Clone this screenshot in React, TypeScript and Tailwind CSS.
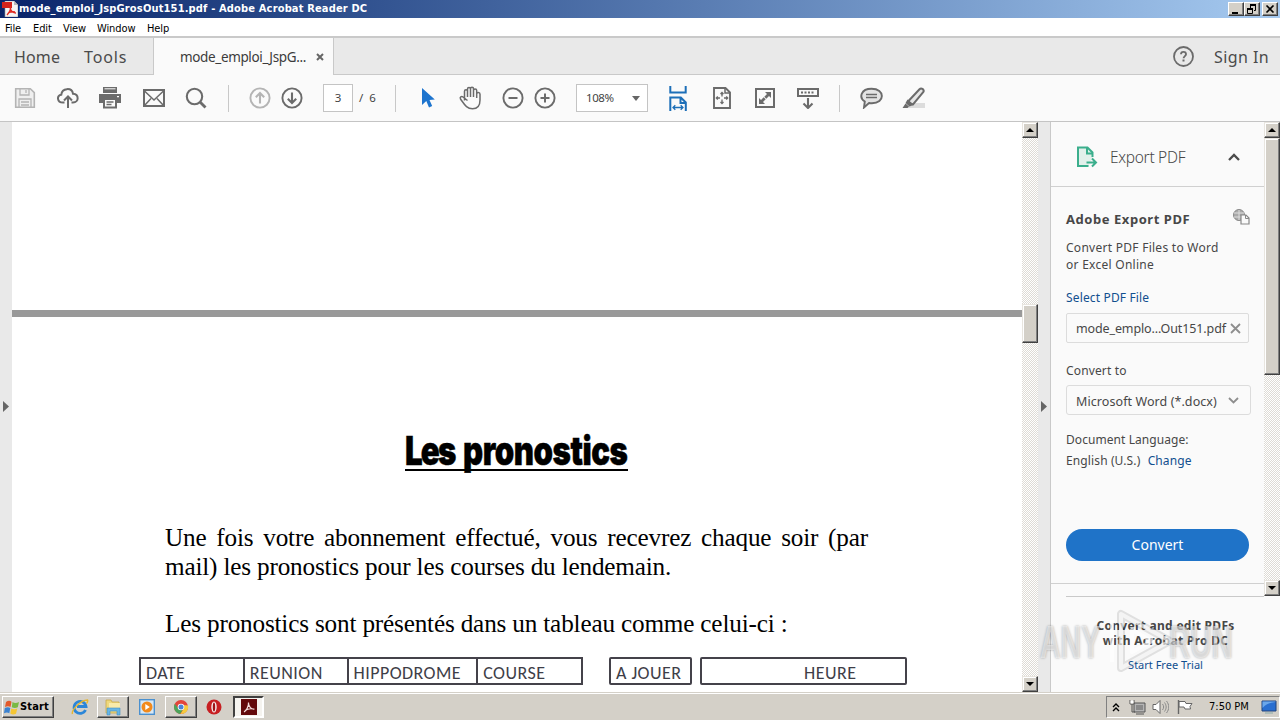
import type { ReactNode } from "react";

const G = "#6b6b6b";

function Svg({ w, h, vb, className = "", children }: { w: number; h: number; vb?: string; className?: string; children: ReactNode }) {
  return (
    <svg width={w} height={h} viewBox={vb ?? `0 0 ${w} ${h}`} fill="none" className={`block shrink-0 ${className}`}>
      {children}
    </svg>
  );
}

function WinButton({ children, className = "" }: { children: ReactNode; className?: string }) {
  return (
    <div className={`flex h-[14px] w-4 items-center justify-center border border-t-white border-r-[#404040] border-b-[#404040] border-l-white bg-[#d4d0c8] shadow-[inset_-1px_-1px_0_#808080] ${className}`}>
      {children}
    </div>
  );
}

function TitleBar() {
  return (
    <div className="flex h-[18px] shrink-0 items-center bg-linear-to-r from-[#0a246a] to-[#a6caf0] pr-[2px] pl-[2px]">
      <Svg w={16} h={16}>
        <path d="M3 0h9l4 4v12H3z" fill="#f4f4f4" stroke="#9a9a9a" strokeWidth=".6" />
        <path d="M12 0v4h4z" fill="#b9b9b9" />
        <rect y="1" width="10" height="6" fill="#d3231c" />
        <path d="M5 14c2-2 4-6 3.600-9M8 7c1 3 3 5 6 5M6 12c2-1 5-1.500 7-1" stroke="#e02a20" strokeWidth="1.300" />
      </Svg>
      <div className="ml-px flex-1 font-['DejaVu_Sans_Condensed','DejaVu_Sans',sans-serif] text-[11px] leading-[18px] font-bold tracking-[0.16px] whitespace-pre text-white">
        mode_emploi_JspGrosOut151.pdf - Adobe Acrobat Reader DC
      </div>
      <WinButton><Svg w={12} h={10}><path d="M2 8h6v2H2z" fill="#000" /></Svg></WinButton>
      <WinButton>
        <Svg w={12} h={11}>
          <path d="M4 1h6M1 5h6" stroke="#000" strokeWidth="2" />
          <path d="M4.500 1v3M9.500 1v5.500H8M1.500 5v4.500h5V5" stroke="#000" />
        </Svg>
      </WinButton>
      <WinButton className="ml-[2px]"><Svg w={10} h={8}><path d="M1.500 .5l7 7M8.500 .5l-7 7" stroke="#000" strokeWidth="1.600" /></Svg></WinButton>
    </div>
  );
}

function MenuBar() {
  return (
    <div className="flex h-[20px] shrink-0 border-b-2 border-[#c9c9c9] bg-white pl-[5px] font-['DejaVu_Sans_Condensed','DejaVu_Sans',sans-serif] text-[11px] leading-[21px] tracking-[-0.1px] text-black">
      <span className="w-[28px]">File</span>
      <span className="w-[30px]">Edit</span>
      <span className="w-[34px]">View</span>
      <span className="w-[50px]">Window</span>
      <span>Help</span>
    </div>
  );
}

function Tabs() {
  return (
    <div className="flex h-[37px] shrink-0 bg-[#e9e9e9] text-[#4b4b4b]">
      <div className="flex w-[154px] border-r border-b border-[#c9c9c9] pl-[14px] text-base leading-[38px] tracking-[0.15px]">
        <span className="w-[70px]">Home</span>
        <span className="tracking-[0.9px]">Tools</span>
      </div>
      <div className="flex w-[179px] items-center bg-[#fafafa] pl-[26px] text-[13.500px] text-[#3c3c3c]">
        <span className="w-[136px] pt-px tracking-[-0.36px]">mode_emploi_JspG...</span>
        <Svg w={8} h={8}><path d="M1 1l6 6M7 1L1 7" stroke="#666" strokeWidth="2" /></Svg>
      </div>
      <div className="flex flex-1 items-center justify-end border-b border-l border-[#c9c9c9] pt-px pr-[11px]">
        <Svg w={22} h={22} className="mr-[19px]">
          <circle cx="10.500" cy="10.500" r="9.500" stroke={G} strokeWidth="1.800" />
          <path d="M8 8.300c0-3.200 5-3.200 5 0 0 1.800-2.400 1.900-2.400 4" stroke={G} strokeWidth="1.900" />
          <path d="M9.500 13.500h2v2h-2z" fill={G} />
        </Svg>
        <span className="text-base tracking-[0.4px]">Sign In</span>
      </div>
    </div>
  );
}

function Sep({ className = "" }: { className?: string }) {
  return <div className={`h-[27px] w-px shrink-0 bg-[#c8c8c8] ${className}`} />;
}

function Toolbar() {
  return (
    <div className="flex h-[47px] shrink-0 items-center border-b border-[#c4c4c4] bg-[#fafafa] pl-[14px] text-[12px] text-[#444]">
      <Svg w={22} h={22}>
        <path d="M1.700 1.700h14.600l4 4v14.600H1.700z" fill="#efefef" stroke="#b4b4b4" strokeWidth="1.600" />
        <path d="M6 2v6h9V2M5 20v-8h12v8M7 15h8M7 18h8M12 3v3" stroke="#b4b4b4" strokeWidth="1.300" />
      </Svg>
      <Svg w={22} h={22} className="ml-[21px]">
        <path d="M7.500 15.500H6C-.2 15.500-.5 8.200 4.300 7.700 5 .7 14.800.2 16 6.700c6.200.3 6.200 8.800 0 8.800h-1.500" stroke={G} strokeWidth="2" />
        <path d="M11 21V10M7 13.500l4-4 4 4" stroke={G} strokeWidth="2" />
      </Svg>
      <Svg w={22} h={22} className="ml-[20px]">
        <path d="M4 0h14v6H4z" fill={G} />
        <path d="M5.500 1.800h11" stroke="#fafafa" />
        <path d="M0 7h22v9h-4v-4H4v4H0z" fill={G} />
        <path d="M5 12h12v8.500H5z" fill="#fafafa" stroke={G} strokeWidth="2" />
        <path d="M7.500 15h7M7.500 17.500h5" stroke={G} strokeWidth="1.300" />
        <path d="M18 9h2v1.300h-2z" fill="#fff" />
      </Svg>
      <Svg w={22} h={18} className="ml-[22px]">
        <rect x="1" y="1" width="20" height="16" stroke={G} strokeWidth="2" />
        <path d="M1.500 2l9.500 9 9.500-9M1.500 16.500l6.500-7M20.500 16.500l-6.500-7" stroke={G} strokeWidth="1.500" />
      </Svg>
      <Svg w={22} h={22} className="ml-[20px]">
        <circle cx="9.500" cy="9.500" r="7.700" stroke={G} strokeWidth="2.100" />
        <path d="M15 15l5.500 5.500" stroke={G} strokeWidth="2.800" />
      </Svg>
      <Sep className="ml-[21px]" />
      <Svg w={22} h={22} className="ml-[20px]">
        <circle cx="11" cy="11" r="9.600" stroke="#b4b4b4" strokeWidth="1.900" />
        <path d="M11 16.500V6M6.800 10.200L11 6l4.200 4.200" stroke="#b4b4b4" strokeWidth="2.100" />
      </Svg>
      <Svg w={22} h={22} className="ml-[10px]">
        <circle cx="11" cy="11" r="9.600" stroke={G} strokeWidth="1.900" />
        <path d="M11 5.500V16M6.800 11.800L11 16l4.200-4.200" stroke={G} strokeWidth="2.100" />
      </Svg>
      <div className="ml-[20px] h-[28px] w-[30px] border border-[#c4c4c4] bg-white text-center text-[11.500px] leading-[26px]">3</div>
      <span className="ml-[6px] w-[17px] text-[11.500px] whitespace-pre">/  6</span>
      <Sep className="ml-[19px]" />
      <Svg w={16} h={22} className="ml-[24px]">
        <path d="M2 1v17l4.300-4 2.700 6.500 3.200-1.400-2.700-6.200 5.300-.4z" fill="#1d74ce" />
      </Svg>
      <Svg w={24} h={24} className="ml-[22px]">
        <path d="M6.500 14.500V5.200c0-2 3-2 3 0V3c0-2 3-2 3 0v-.3c0-2 3-2 3 0V4.500c0-2 3.200-2 3.200 0V8c0-2 3.300-2 3.300.2V14c0 5.500-2.500 8.800-7.500 8.800-6 0-8-4.300-12-9.800-1-2 1-3.200 2.500-2l4.500 3.500M9.500 5v6M12.500 3v8M15.500 4v7M18.700 7v5" stroke={G} strokeWidth="1.500" strokeLinejoin="round" />
      </Svg>
      <Svg w={22} h={22} className="ml-[20px]">
        <circle cx="11" cy="11" r="9.600" stroke={G} strokeWidth="1.900" />
        <path d="M6.500 11h9" stroke={G} strokeWidth="2" />
      </Svg>
      <Svg w={22} h={22} className="ml-[10px]">
        <circle cx="11" cy="11" r="9.600" stroke={G} strokeWidth="1.900" />
        <path d="M6.500 11h9M11 6.500v9" stroke={G} strokeWidth="2" />
      </Svg>
      <div className="ml-[20px] flex h-[28px] w-[72px] shrink-0 items-center justify-between border border-[#c4c4c4] bg-white pr-[7px] pl-[9px]">
        <span className="text-[11.500px] tracking-[-0.4px]">108%</span>
        <Svg w={8} h={5}><path d="M0 0h8L4 5z" fill="#666" /></Svg>
      </div>
      <Svg w={18} h={25} className="ml-[21px]">
        <path d="M1.300 0v6.500h15.400V0M1.300 25V11.500h10.500l5 5V25M11.500 12v5h5" stroke="#1d6fb8" strokeWidth="2" />
        <path d="M4 21.500h10M6.300 19.200L4 21.500l2.300 2.300M11.700 19.200l2.300 2.300-2.300 2.300" stroke="#1d6fb8" strokeWidth="1.300" />
      </Svg>
      <Svg w={18} h={22} className="ml-[26px]">
        <path d="M1 1h11.500l4.500 4.500V21H1z" stroke={G} strokeWidth="1.900" />
        <path d="M12 1v5h5" stroke={G} strokeWidth="1.500" />
        <path d="M9 5.500v4M9 12.500v4M3.300 11h3.700M11 11h3.700M7.500 7L9 5.500 10.500 7M7.500 15L9 16.500 10.500 15M4.800 9.500L3.300 11l1.500 1.500M13.200 9.500l1.500 1.500-1.500 1.500" stroke={G} strokeWidth="1.300" />
      </Svg>
      <Svg w={20} h={20} className="ml-[24px]">
        <rect x="1" y="1" width="18" height="18" stroke={G} strokeWidth="2" />
        <path d="M10 4h6v6l-2-2-2.700 2.700-2-2L12 6zM10 16H4v-6l2 2 2.700-2.700 2 2L8 14z" fill={G} />
      </Svg>
      <Svg w={22} h={22} className="ml-[22px]">
        <rect x="1" y="2" width="20" height="7" stroke={G} strokeWidth="2" />
        <path d="M4 5.500h14" stroke={G} strokeWidth="2" strokeDasharray="2 1.500" />
        <path d="M11 11v10M6.500 16.500L11 21l4.500-4.500" stroke={G} strokeWidth="2.100" />
      </Svg>
      <Sep className="ml-[20px]" />
      <Svg w={24} h={22} className="ml-[20px]">
        <path d="M11.500 1.800c14 0 13.500 14.500.5 14.500-1.200 0-2.200-.1-3-.3L4 20.500l.8-6C-1.500 10.500 1 1.800 11.500 1.800z" fill="#e4e4e4" stroke={G} strokeWidth="1.900" />
        <path d="M6 7.500h11M6 10.500h11" stroke={G} strokeWidth="1.400" />
      </Svg>
      <Svg w={24} h={22} className="ml-[18px]">
        <path d="M9 16h14v5H5z" fill="#dcdcdc" />
        <path d="M6.500 14L17.500 2.200c2-2 5.500.8 3.700 3L11 17.500c-1.500-.2-4-2-4.500-3.500z" fill="#e6e6e6" stroke={G} strokeWidth="2" />
        <path d="M5.500 12.500l6.500 5.300L7.500 19.500l-4-3.500zM.5 21l3-4.500 3.500 3-1.500 1.500z" fill={G} />
      </Svg>
    </div>
  );
}

const dither = "bg-[repeating-conic-gradient(#dedbd5_0_25%,#ffffff_0_50%)] bg-[length:2px_2px]";

function ScrollButton({ down }: { down?: boolean }) {
  return (
    <div className="flex h-4 w-4 shrink-0 items-center justify-center border border-t-[#e8e5df] border-r-[#404040] border-b-[#404040] border-l-[#e8e5df] bg-[#d4d0c8] shadow-[inset_-1px_-1px_0_#808080,inset_1px_1px_0_#fff]">
      <Svg w={8} h={4}><path d={down ? "M0 0h8L4 4z" : "M0 4h8L4 0z"} fill="#000" /></Svg>
    </div>
  );
}

function Thumb({ className }: { className: string }) {
  return <div className={`w-4 shrink-0 border border-t-[#e8e5df] border-r-[#404040] border-b-[#404040] border-l-[#e8e5df] bg-[#d4d0c8] shadow-[inset_-1px_-1px_0_#808080,inset_1px_1px_0_#fff] ${className}`} />;
}

const cell = "border-r-2 border-[#44424a] pl-[5px]";

function Document() {
  return (
    <div className="flex w-[1010px] shrink-0 flex-col overflow-hidden bg-white text-black">
      <div className="h-[188px] shrink-0" />
      <div className="h-[7px] shrink-0 bg-[#999]" />
      <div className="mt-[111px] flex h-[44px] shrink-0 pl-[393px]">
        <div className="flex h-[43px] w-[223px] items-start border-b-2 border-black">
          <span className="origin-left scale-x-[0.79] pt-[2px] font-['Inter',sans-serif] text-[39.500px] leading-[42px] font-black tracking-[-0.600px] whitespace-nowrap [-webkit-text-stroke:0.5px_black] [word-spacing:3.5px]">
            <span className="tracking-[-2.300px]">Les</span> pronostics
          </span>
        </div>
      </div>
      <div className="mt-[51px] shrink-0 pl-[153px] font-['Liberation_Serif',serif] text-[25.200px] leading-[29px] tracking-[-0.17px]">
        <p className="w-[703px] text-justify [text-align-last:justify]">Une fois votre abonnement effectué, vous recevrez chaque soir (par</p>
        <p className="whitespace-nowrap">mail) les pronostics pour les courses du lendemain.</p>
        <p className="mt-[28px] whitespace-nowrap">Les pronostics sont présentés dans un tableau comme celui-ci :</p>
      </div>
      <div className="mt-[19px] flex h-[28px] shrink-0 pl-[127px] font-['Carlito','Open_Sans',sans-serif] text-[18px] leading-[28px] tracking-[0.45px] text-[#3e3e48]">
        <div className="flex h-[28px] w-[444px] border-2 border-r-0 border-[#44424a]">
          <span className={`w-[104px] ${cell}`}>DATE</span>
          <span className={`w-[104px] ${cell}`}>REUNION</span>
          <span className={`w-[130px] ${cell}`}>HIPPODROME</span>
          <span className={`w-[105px] ${cell}`}>COURSE</span>
        </div>
        <div className="ml-[26px] h-[28px] w-[83px] rounded-xs border-2 border-[#44424a] pl-[5px] whitespace-nowrap">A JOUER</div>
        <div className="ml-[8px] h-[28px] w-[207px] rounded-xs border-2 border-[#44424a] pl-[102px]">HEURE</div>
      </div>
    </div>
  );
}

function ExportPanel() {
  return (
    <div className="flex min-w-0 flex-1 flex-col border-l border-[#c9c9c9] bg-[#fafafa] text-[#474747]">
      <div className="flex h-[475px] shrink-0">
        <div className="flex w-[213px] shrink-0 flex-col overflow-hidden">
          <div className="flex h-[65px] shrink-0 items-center border-b border-[#d0d0d0] pt-[6px] pl-[25px]">
            <Svg w={22} h={22}>
              <path d="M12.500 20H2V1.500h9.500l5 5V11" fill="#e2f0eb" stroke="#3bae8c" strokeWidth="2" />
              <path d="M11 2v5.500h5.500M10.500 16.500h9M16 12.500l4 4-4 4" stroke="#3bae8c" strokeWidth="2" />
            </Svg>
            <span className="ml-[12px] w-[118px] pt-[2px] text-[15.500px] font-light tracking-[-0.3px]">Export PDF</span>
            <Svg w={12} h={8}><path d="M1 7l5-5 5 5" stroke="#4b4b4b" strokeWidth="2.300" /></Svg>
          </div>
          <div className="flex shrink-0 flex-col pl-[15px] text-[12px] leading-[17px]">
            <div className="mt-[21px] flex h-[22px] items-center justify-between pr-[14px] text-[13px] font-bold">
              <span className="tracking-[0.55px]">Adobe Export PDF</span>
              <Svg w={17} h={16} className="mb-[4px]">
                <circle cx="6" cy="6" r="5.500" fill="#aaa" stroke="#888" />
                <path d="M1 4h10M1 8h10M6 1v10" stroke="#ddd" />
                <path d="M8 6h5l3 3v6H8z" fill="#fafafa" stroke="#888" strokeWidth="1.200" />
                <path d="M12.500 6v3.500H16" stroke="#888" />
              </Svg>
            </div>
            <p className="mt-[9px] tracking-[0.27px]">Convert PDF Files to Word<br />or Excel Online</p>
            <p className="mt-[16px] tracking-[0.15px] text-[#114f8f]">Select PDF File</p>
            <div className="mt-[7px] flex h-[30px] w-[183px] items-center rounded-xs border border-[#dcdcdc] pl-[9px]">
              <span className="w-[154px] text-[12.500px] tracking-[-0.12px]">mode_emplo...Out151.pdf</span>
              <Svg w={11} h={11}><path d="M1 1l9 9M10 1l-9 9" stroke="#8e8e8e" strokeWidth="1.800" /></Svg>
            </div>
            <p className="mt-[19px] tracking-[0.15px]">Convert to</p>
            <div className="mt-[6px] flex h-[30px] w-[185px] items-center rounded-[3px] border border-[#dcdcdc] pl-[9px]">
              <span className="w-[152px] pt-[2px] text-[12.500px] tracking-[0.08px]">Microsoft Word (*.docx)</span>
              <Svg w={11} h={7}><path d="M1 1l4.500 4.500L10 1" stroke="#8e8e8e" strokeWidth="1.800" /></Svg>
            </div>
            <p className="mt-[16px] tracking-[0.07px]">Document Language:</p>
            <p className="mt-[4px] tracking-[0.12px]">English (U.S.) <span className="ml-[4px]  text-[#114f8f]">Change</span></p>
            <div className="mt-[60px] h-[32px] w-[183px] rounded-full bg-[#1f73c8] text-center text-[14px] leading-[31px] text-white">Convert</div>
          </div>
          <div className="mt-[22px] h-px shrink-0 bg-[#d0d0d0]" />
        </div>
        <div className={`flex w-4 flex-col ${dither}`}>
          <ScrollButton />
          <Thumb className="h-[237px]" />
          <div className="flex-1" />
          <ScrollButton down />
          <div className="h-px bg-[#fafafa]" />
        </div>
      </div>
      <div className="-mt-px ml-[15px] h-px w-[198px] shrink-0 bg-[#c9c9c9]" />
      <div className="mt-[21px] text-center text-[12px] leading-[15px] font-bold tracking-[0.3px]">Convert and edit PDFs<br />with Acrobat Pro DC</div>
      <div className="relative z-10 mt-[8px] text-center text-[11px] leading-[17px] text-[#114f8f]">Start Free Trial</div>
    </div>
  );
}

function Watermark() {
  return (
    <div className="absolute top-[606px] left-[1040px] flex h-[70px] w-[195px] items-center justify-between font-['Liberation_Sans',sans-serif] text-[46px] leading-[70px] font-bold text-white/55 [text-shadow:0_0_3px_#0005]">
      <span className="w-[60px] origin-left scale-x-[0.62] pt-[2px]">ANY</span>
      <Svg w={70} h={66} className="absolute left-[64px]">
        <path d="M17 6v54l49-27z" stroke="#000" strokeOpacity=".1" strokeWidth="8" strokeLinejoin="round" />
        <path d="M17 6v54l49-27zM8 12v42M28 22v22l20-11z" stroke="#fff" strokeOpacity=".65" strokeWidth="4" strokeLinejoin="round" />
      </Svg>
      <span className="w-[66px] origin-left scale-x-[0.64] pt-[2px]">RUN</span>
    </div>
  );
}

function TaskButton({ active, children }: { active?: boolean; children: ReactNode }) {
  return (
    <div className={active
      ? "flex h-[22px] w-[31px] items-center justify-center border-2 border-t-[#404040] border-r-white border-b-white border-l-[#404040] bg-[#f5f3ef]"
      : "flex h-[22px] w-[32px] items-center justify-center border border-t-white border-r-[#404040] border-b-[#404040] border-l-white bg-[#d4d0c8] shadow-[inset_-1px_-1px_0_#808080]"}>
      {children}
    </div>
  );
}

function Taskbar() {
  return (
    <div className="flex h-[28px] shrink-0 items-center border-t border-[#d4d0c8] bg-[#d4d0c8] pt-[1px] pl-[2px] font-['DejaVu_Sans_Condensed','DejaVu_Sans',sans-serif] text-[11px] text-black shadow-[inset_0_1px_0_#fff]">
      <div className="flex h-[22px] w-[52px] items-center border border-t-white border-r-[#404040] border-b-[#404040] border-l-white pl-px font-bold shadow-[inset_-1px_-1px_0_#808080]">
        <Svg w={16} h={16}>
          <path d="M2 3c2-1.500 4-1.500 5.500-.3L6.500 8C5 7 3 7 1 8z" fill="#e35a2b" />
          <path d="M8.500 3c2 1.300 4 1.200 6.500 0l-1.200 5.200c-2 1-4 1-6 0z" fill="#79b943" />
          <path d="M.8 9c2-1 4-1 5.500 0l-1 5.300C4 13.300 2 13.300 0 14.300z" fill="#3b82d0" />
          <path d="M7.300 9.400c2 1 4 1 6 0L12 14.700c-2 1-4 1-5.700-.3z" fill="#f5c633" />
        </Svg>
        <span className="tracking-[0.15px]">Start</span>
      </div>
      <Svg w={18} h={18} className="ml-[17px]">
        <path d="M14.500 12A6 6 0 1 1 15 8.500H6" stroke="#2b86d8" strokeWidth="2.800" />
        <path d="M1.500 16C0 13 9 2 16.500 2c.8 1-.3 2.500-1 3.500" stroke="#e6b62e" strokeWidth="1.400" />
      </Svg>
      <div className="ml-[8px]">
        <TaskButton>
          <Svg w={18} h={18}>
            <path d="M2 2h5l1 2h7v11H2z" fill="#eed87d" stroke="#c9a948" strokeWidth=".8" />
            <path d="M5 5h11v8H5z" fill="#f9ebaa" />
            <path d="M3 10h13v7h-3v-4H6v4H3z" fill="#67b6e5" stroke="#3f8fc4" strokeWidth=".6" />
          </Svg>
        </TaskButton>
      </div>
      <Svg w={16} h={16} className="ml-[10px]">
        <rect x=".7" y=".7" width="14.600" height="14.600" fill="#d7e8f5" stroke="#4a90cf" strokeWidth="1.400" />
        <circle cx="8" cy="8" r="5.500" fill="#f28a1c" />
        <path d="M6.300 5v6l4.500-3z" fill="#fff" />
      </Svg>
      <div className="ml-[10px]">
        <TaskButton>
          <Svg w={16} h={16}>
            <circle cx="8" cy="8" r="7" fill="#e2453b" />
            <path d="M1.800 4.800A7 7 0 0 0 7 14.900L11 9 5 9z" fill="#4ba45a" />
            <path d="M15 6.500A7 7 0 0 1 7.500 15L11 9l-1-3z" fill="#f6cb3e" />
            <circle cx="8" cy="8" r="3.300" fill="#fff" />
            <circle cx="8" cy="8" r="2.500" fill="#4a83d8" />
          </Svg>
        </TaskButton>
      </div>
      <Svg w={16} h={16} className="ml-[9px]">
        <circle cx="8" cy="8" r="7.500" fill="#c71f22" />
        <ellipse cx="8" cy="8" rx="2.700" ry="5.500" fill="#f6eeee" />
        <ellipse cx="8" cy="8" rx="1.200" ry="4.500" fill="#a01216" />
      </Svg>
      <div className="ml-[11px]">
        <TaskButton active>
          <Svg w={16} h={16}>
            <path d="M0 0h16v16H0z" fill="#63090b" />
            <path d="M3 13c2-1 5-6 4.500-9.500M7.500 4c0 4 3 6.500 6 6M4 11.500c3-2 6-2 8.500-1.500" stroke="#f5dede" strokeWidth="1.200" />
          </Svg>
        </TaskButton>
      </div>
      <div className="flex-1" />
      <div className="flex h-[22px] w-[174px] items-center border border-t-[#808080] border-r-white border-b-white border-l-[#808080]">
        <Svg w={8} h={9} className="ml-[5px]"><path d="M1 4l3-3 3 3M1 8l3-3 3 3" stroke="#000" strokeWidth="1.400" /></Svg>
        <Svg w={17} h={16} className="ml-[9px]">
          <path d="M5 4h11v9H5z" fill="#b5b5b5" stroke="#555" />
          <path d="M7 6h7v5H7z" fill="#8a8a8a" />
          <path d="M7 15h8M1 1v4h4V1M3 5v8h3" stroke="#555" />
          <path d="M1.500 1.500h3v3h-3z" fill="#fff" />
        </Svg>
        <Svg w={17} h={16} className="ml-[6px]">
          <path d="M1 5.500h3l4-4v13l-4-4H1z" fill="#fff" stroke="#666" />
          <path d="M10.500 5c1.500 2 1.500 4 0 6M12.500 3.500c2.200 3 2.200 6 0 9M14.500 2c3 4 3 8 0 12" stroke="#8a8a8a" />
        </Svg>
        <Svg w={16} h={16} className="ml-[8px]">
          <path d="M2 2.500h6l1 2h6l-2 3 .5 2.500H8l-1-2H2z" fill="#fff" stroke="#666" />
          <path d="M1.500 1v14" stroke="#666" strokeWidth="1.400" />
        </Svg>
        <span className="ml-[16px] w-[52px] pt-px whitespace-nowrap">7:50 PM</span>
        <Svg w={16} h={14}>
          <path d="M1 1h14v10H1z" fill="#2a6fd0" stroke="#23447c" />
          <path d="M1.500 8c4-5 8-5 13-6v-.5h-13z" fill="#6ba7ea" />
          <path d="M4 13h8" stroke="#8aa" />
        </Svg>
      </div>
    </div>
  );
}

export default function App() {
  return (
    <div className="relative flex h-[720px] w-[1280px] flex-col overflow-hidden bg-[#fafafa] font-['Noto_Sans',sans-serif]">
      <TitleBar />
      <MenuBar />
      <Tabs />
      <Toolbar />
      <div className="flex h-[570px] shrink-0 overflow-hidden">
        <div className="flex w-3 shrink-0 items-center bg-[#e9e9e9] pb-[2px] pl-[3px]">
          <Svg w={6} h={11}><path d="M0 0v11l6-5.500z" fill="#666" /></Svg>
        </div>
        <Document />
        <div className={`flex w-4 shrink-0 flex-col ${dither}`}>
          <ScrollButton />
          <Thumb className="mt-[166px] h-[39px]" />
          <div className="flex-1" />
          <ScrollButton down />
        </div>
        <div className="flex w-3 shrink-0 items-center bg-[#e9e9e9] pb-[2px] pl-[3px]">
          <Svg w={6} h={11}><path d="M0 0v11l6-5.500z" fill="#666" /></Svg>
        </div>
        <ExportPanel />
      </div>
      <Taskbar />
      <Watermark />
    </div>
  );
}
